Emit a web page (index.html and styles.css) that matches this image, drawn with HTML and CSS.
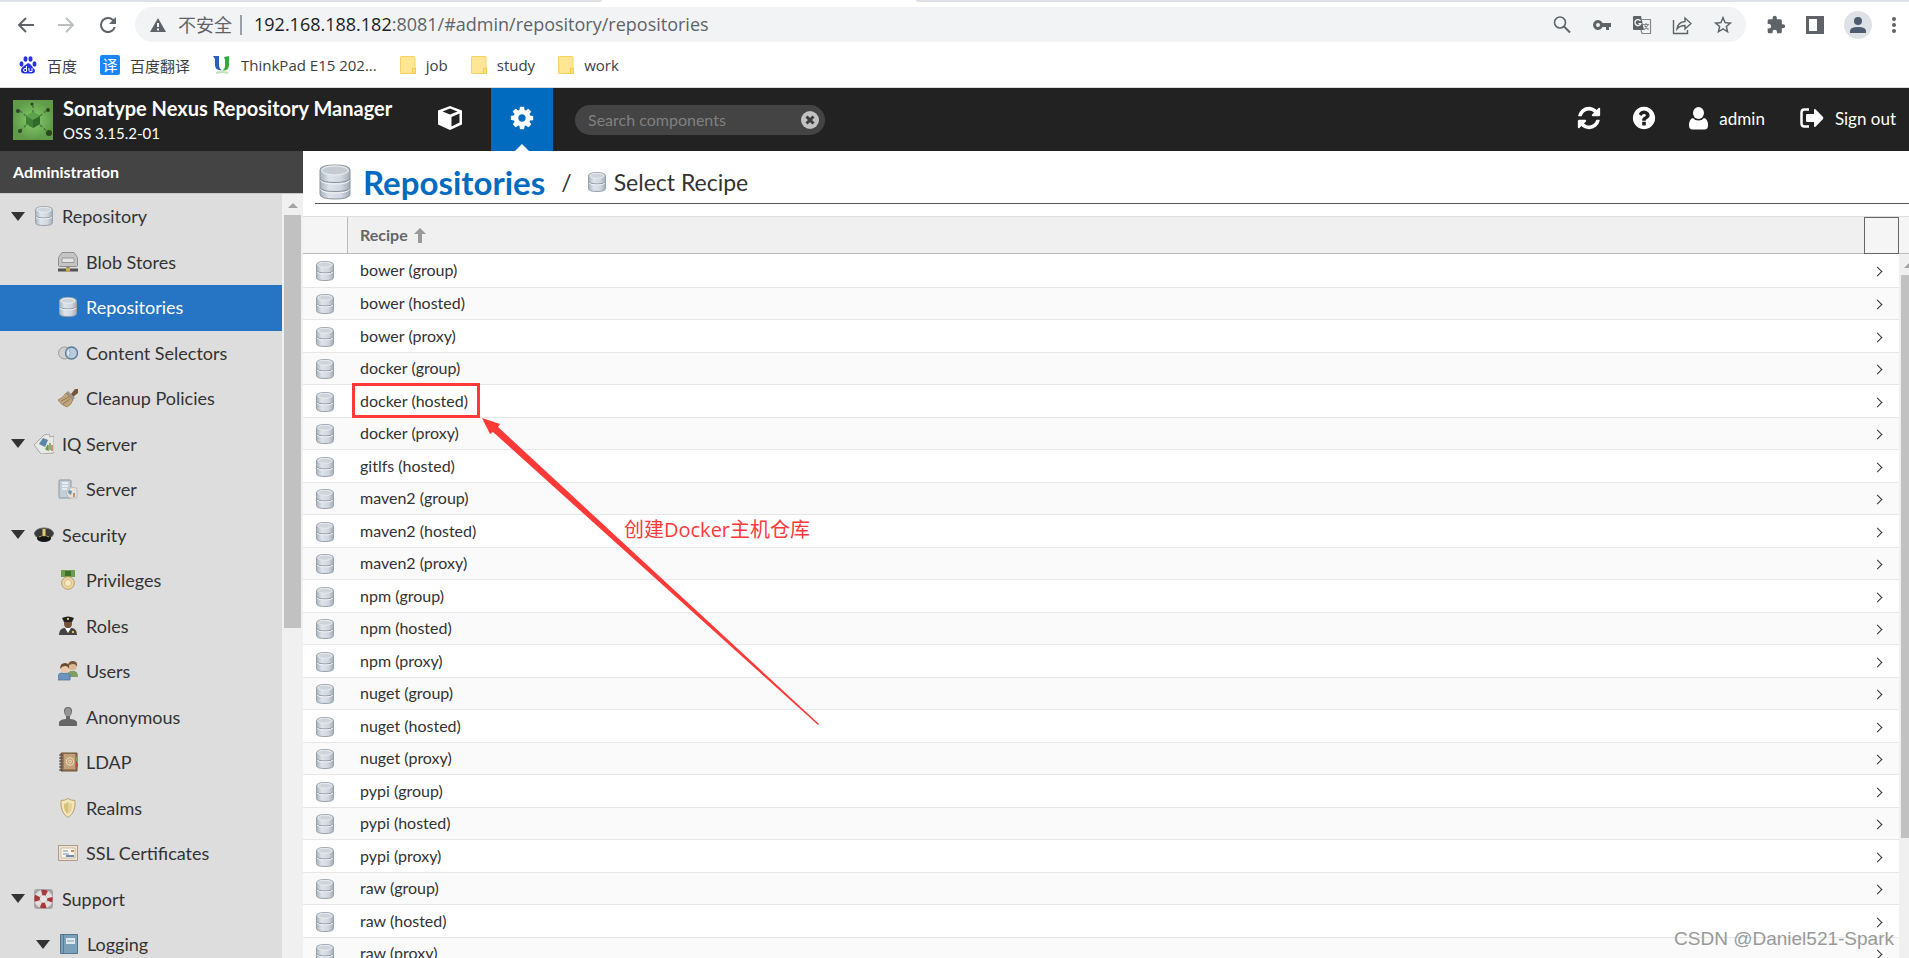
FILE: index.html
```
<!DOCTYPE html>
<html lang="zh-CN">
<head>
    <meta charset="UTF-8">
    <meta name="viewport" content="width=device-width, initial-scale=1.0">
    <title>Repositories - Nexus Repository Manager</title>
    <link rel="stylesheet" href="styles.css">
</head>
<body>

<!-- Shared icons -->
<svg class="defs" aria-hidden="true">
    <defs>
        <linearGradient id="steel" x1="0" x2="1" y1="0" y2="0">
            <stop offset="0" stop-color="#a9b3bd"/>
            <stop offset=".3" stop-color="#dde3ea"/>
            <stop offset=".7" stop-color="#d0d7e0"/>
            <stop offset="1" stop-color="#a3adb7"/>
        </linearGradient>
        <radialGradient id="green">
            <stop offset="0" stop-color="#86cd6c"/>
            <stop offset="1" stop-color="#5f9b49"/>
        </radialGradient>
    </defs>
    <symbol id="db" viewBox="0 0 18 20">
        <path d="M.5 4q0-3.500 8.500-3.500t8.500 3.500v12.500q0 3-8.500 3t-8.500-3z" fill="url(#steel)" stroke="#98a2ab"/>
        <ellipse cx="9" cy="3.800" rx="7.300" ry="2.500" fill="#cdd4db" stroke="#eef1f4" stroke-width=".8"/>
        <path d="M1 10q1 2 8 2t8-2" fill="none" stroke="#8f99a3"/>
        <path d="M1 11q1 2 8 2t8-2" fill="none" stroke="#f1f4f7"/>
    </symbol>
    <symbol id="db-big" viewBox="0 0 32 37">
        <path d="M1 6q0-5 15-5t15 5v24q0 5-15 5t-15-5z" fill="url(#steel)" stroke="#8b959e"/>
        <ellipse cx="16" cy="6.500" rx="13.500" ry="4.500" fill="#c3cad1" stroke="#f0f3f6"/>
        <path d="M1.500 15q2 3.500 14.500 3.500t14.500-3.500M1.500 24q2 3.500 14.500 3.500t14.500-3.500" fill="none" stroke="#87919a"/>
        <path d="M1.500 16.500q2 3.500 14.500 3.500t14.500-3.500M1.500 25.500q2 3.500 14.500 3.500t14.500-3.500" fill="none" stroke="#f3f6f9"/>
    </symbol>
    <symbol id="folder" viewBox="0 0 16 18">
        <path d="M1 .5h13q1 0 1 1v10.500h.5v5.500h-14.500q-.5 0-.5-.5v-16q0-.5.5-.5z" fill="#ffe694" stroke="#f6d260"/>
        <path d="M12.500 12.500h3v5h-3z" fill="#ffe27e" stroke="#f2c94a"/>
    </symbol>
    <symbol id="down" viewBox="0 0 14 9"><path d="M0 0h14l-7 9z" fill="#333"/></symbol>
</svg>

<div class="tabstrip"><i class="tab-left"></i><i class="tab-right"></i></div>

<div class="toolbar">
    <button class="tool" aria-label="Back"><svg width="20" height="20" viewBox="0 0 20 20"><path d="M18 10H3M10 3l-7 7 7 7" fill="none" stroke="#5f6368" stroke-width="2"/></svg></button>
    <button class="tool" aria-label="Forward"><svg width="20" height="20" viewBox="0 0 20 20"><path d="M2 10h15M10 3l7 7-7 7" fill="none" stroke="#bdc0c3" stroke-width="2"/></svg></button>
    <button class="tool" aria-label="Reload"><svg width="24" height="24" viewBox="0 0 24 24"><path d="M17.650 6.350A7.950 7.950 0 0 0 12 4a8 8 0 1 0 7.730 10h-2.080A6 6 0 1 1 12 6c1.660 0 3.140.69 4.220 1.780L13 11h7V4z" fill="#5f6368"/></svg></button>
    <div class="omnibox">
        <svg class="warn" width="16" height="14" viewBox="0 0 16 14"><path d="M8 0l8 14H0z" fill="#5f6368"/><path d="M7 5h2v4H7zM7 10.500h2v2H7z" fill="#f1f3f4"/></svg>
        <span class="insecure">不安全</span>
        <span class="sep"></span>
        <p class="url"><b>192.168.188.182</b>:8081/#admin/repository/repositories</p>
        <svg width="20" height="20" viewBox="0 0 20 20"><circle cx="8" cy="7.500" r="5.500" fill="none" stroke="#5f6368" stroke-width="1.600"/><path d="M12 11.500l6 6" stroke="#5f6368" stroke-width="2"/></svg>
        <svg width="20" height="20" viewBox="0 0 20 20"><path d="M10.600 8A5 5 0 1 0 10.600 12H14v3h3v-3h2V8zM6 12a2 2 0 1 1 0-4 2 2 0 0 1 0 4z" fill="#5f6368"/></svg>
        <svg width="20" height="20" viewBox="0 0 20 20"><path d="M2 1h7l3 14H2q-1 0-1-1V2q0-1 1-1z" fill="#5f6368"/><path d="M8.500 6a3 3 0 1 0 .3 2.500H6.500" fill="none" stroke="#fff" stroke-width="1.200"/><path d="M10 4.500h8.500v14H10l-1-3.500M11 9.500h6M14 8v1.500M12 15l4-5M12.500 10.500l4 4" fill="none" stroke="#85898d" stroke-width="1.200"/></svg>
        <svg width="20" height="20" viewBox="0 0 20 20"><path d="M1.500 5v13.500h14V15M5 14q1-7 8-7.500V3l6 5.500-6 5.500v-3.500q-5 0-8 3.500z" fill="none" stroke="#5f6368" stroke-width="1.400"/></svg>
        <svg width="22" height="22" viewBox="0 0 24 24"><path d="M22 9.240l-7.190-.62L12 2 9.190 8.630 2 9.240l5.460 4.730L5.820 21 12 17.270 18.180 21l-1.630-7.030zM12 15.400l-3.760 2.270 1-4.280-3.320-2.880 4.380-.38L12 6.100l1.710 4.040 4.380.38-3.320 2.880 1 4.280z" fill="#5f6368"/></svg>
    </div>
    <button class="tool" aria-label="Extensions"><svg width="20" height="20" viewBox="0 0 24 24"><path d="M20.500 11H19V7a2 2 0 0 0-2-2h-4V3.500a2.500 2.500 0 0 0-5 0V5H4a2 2 0 0 0-2 2v3.800h1.500a2.700 2.700 0 0 1 0 5.400H2V20a2 2 0 0 0 2 2h3.800v-1.500a2.700 2.700 0 0 1 5.400 0V22H17a2 2 0 0 0 2-2v-4h1.500a2.500 2.500 0 0 0 0-5z" fill="#5f6368"/></svg></button>
    <button class="tool" aria-label="Side panel"><svg width="18" height="18" viewBox="0 0 18 18"><path d="M0 0h18v18H0zM3 3v12h8V3z" fill="#5f6368" fill-rule="evenodd"/></svg></button>
    <button class="tool" aria-label="Profile"><svg width="28" height="28" viewBox="0 0 28 28"><circle cx="14" cy="14" r="14" fill="#dee1e6"/><circle cx="14" cy="10" r="4" fill="#4e5a70"/><path d="M6 22v-2q0-4 8-4t8 4v2z" fill="#4e5a70"/></svg></button>
    <button class="tool" aria-label="Menu"><svg width="4" height="16" viewBox="0 0 4 16" fill="#5f6368"><circle cx="2" cy="2" r="2"/><circle cx="2" cy="8" r="2"/><circle cx="2" cy="14" r="2"/></svg></button>
</div>

<div class="bookmarks">
    <a href="#"><svg width="18" height="18" viewBox="0 0 18 18"><g fill="#2932e1"><ellipse cx="2.500" cy="8" rx="2" ry="2.700"/><ellipse cx="6.500" cy="3" rx="2" ry="2.800"/><ellipse cx="11.500" cy="3" rx="2" ry="2.800"/><ellipse cx="15.500" cy="8" rx="2" ry="2.700"/><path d="M9 7q2 0 3.500 2.500T16 14q0 4-4 3.500H6Q2 18 2 14q0-2 3.500-4.500T9 7z"/></g><path d="M7.500 10v5.500M7.500 12.500H6q-1.500 0-1.500 1.500t1.500 1.500h1.500M10 12v2.500q0 1 1 1h2V12" fill="none" stroke="#fff"/></svg>百度</a>
    <a href="#"><span class="fanyi">译</span>百度翻译</a>
    <a href="#"><svg width="18" height="18" viewBox="0 0 18 18"><path d="M0 0h6v9q0 4 3 5-7 1-7-5V3z" fill="#2a5fb4"/><path d="M11 1l5-1v9q0 6-7 5.500 3-1 3-5V4z" fill="#35a936"/><path d="M3 17q6-2 12 0" fill="none" stroke="#bfe3bd" stroke-width="2"/></svg>ThinkPad E15 202...</a>
    <a href="#"><svg width="16" height="18"><use href="#folder"/></svg>job</a>
    <a href="#"><svg width="16" height="18"><use href="#folder"/></svg>study</a>
    <a href="#"><svg width="16" height="18"><use href="#folder"/></svg>work</a>
</div>

<header class="header">
    <svg class="logo" width="40" height="40" viewBox="0 0 40 40">
        <path d="M0 0h40v40H0z" fill="url(#green)"/>
        <path d="M20 13V5M27 16l7-6M27 25l9 8M13 25l-6 6M13 16L6 10" stroke="#4a7a3e" stroke-width="1.500" stroke-dasharray="3 2"/>
        <g fill="#2b4526"><circle cx="19" cy="4" r="1.500"/><circle cx="35" cy="10" r="2"/><circle cx="36" cy="33" r="3"/><circle cx="7" cy="31" r="2"/><circle cx="5" cy="11" r="2"/></g>
        <path d="M20 12l7 4v8l-7 4-7-4v-8z" fill="#3f7d36"/><path d="M20 12l7 4-7 4-7-4z" fill="#5ba34b"/><path d="M20 20l7-4v8l-7 4z" fill="#326a2b"/>
    </svg>
    <div class="brand">
        <strong>Sonatype Nexus Repository Manager</strong>
        <span>OSS 3.15.2-01</span>
    </div>
    <button class="mode" aria-label="Browse"><svg width="24" height="24" viewBox="0 0 24 24"><path d="M12 0l12 4.500v14L12 24 0 18.500v-14zM12 2.500L4.500 5.500 12 8.500l7.500-3zM13.500 11v9.500l8-4v-9z" fill="#fff" fill-rule="evenodd"/></svg></button>
    <button class="mode active" aria-label="Administration"><svg width="26" height="26" viewBox="0 0 1792 1792"><path fill="#fff" d="M1152 896q0-106-75-181t-181-75-181 75-75 181 75 181 181 75 181-75 75-181zm512-109v222q0 12-8 23t-20 13l-185 28q-19 54-39 91 35 50 107 138 10 12 10 25t-9 23q-27 37-99 108t-94 71q-12 0-26-9l-138-108q-44 23-91 38-16 136-29 186-7 28-36 28h-222q-14 0-24.500-8.500t-11.500-21.500l-28-184q-49-16-90-37l-141 107q-10 9-25 9-14 0-25-11-126-114-165-168-7-10-7-23 0-12 8-23 15-21 51-66.500t54-70.500q-27-50-41-99l-183-27q-13-2-21-12.500t-8-23.500v-222q0-12 8-23t19-13l186-28q14-46 39-92-40-57-107-138-10-12-10-24 0-10 9-23 26-36 98.500-107.500t94.500-71.500q13 0 26 10l138 107q44-23 91-38 16-136 29-186 7-28 36-28h222q14 0 24.500 8.500t11.500 21.500l28 184q49 16 90 37l142-107q9-9 24-9 13 0 25 10 129 119 165 170 7 8 7 22 0 12-8 23-15 21-51 66.500t-54 70.500q26 50 41 98l183 28q13 2 21 12.500t8 23.500z"/></svg></button>
    <div class="search">
        <input type="text" placeholder="Search components" aria-label="Search components">
        <button aria-label="Clear"><svg width="18" height="18" viewBox="0 0 18 18"><circle cx="9" cy="9" r="9" fill="#c3c3c3"/><path d="M5.500 5.500l7 7M12.500 5.500l-7 7" stroke="#3d3d3d" stroke-width="3"/></svg></button>
    </div>
    <div class="actions">
        <button aria-label="Refresh"><svg width="26" height="26" viewBox="0 0 1792 1792"><path fill="#fff" d="M1639 1056q0 5-1 7-64 268-268 434.500t-478 166.500q-146 0-282.500-55t-243.500-157l-129 129q-19 19-45 19t-45-19-19-45v-448q0-26 19-45t45-19h448q26 0 45 19t19 45-19 45l-137 137q71 66 161 102t187 36q134 0 250-65t186-179q11-17 53-117 8-23 30-23h192q13 0 22.500 9.500t9.500 22.500zm25-800v448q0 26-19 45t-45 19h-448q-26 0-45-19t-19-45 19-45l138-138q-148-137-349-137-134 0-250 65t-186 179q-11 17-53 117-8 23-30 23h-199q-13 0-22.500-9.500t-9.500-22.500v-7q65-268 270-434.500t480-166.500q146 0 284 55.500t245 156.500l130-129q19-19 45-19t45 19 19 45z"/></svg></button>
        <button aria-label="Help"><svg width="26" height="26" viewBox="0 0 1792 1792"><path fill="#fff" d="M1024 1376v-192q0-14-9-23t-23-9h-192q-14 0-23 9t-9 23v192q0 14 9 23t23 9h192q14 0 23-9t9-23zm256-672q0-88-55.500-163t-138.500-116-170-41q-243 0-371 213-15 24 8 42l132 100q7 6 19 6 16 0 25-12 53-68 86-92 34-24 86-24 48 0 85.500 26t37.500 59q0 38-20 61t-68 45q-63 28-115.500 86.500t-52.500 125.500v36q0 14 9 23t23 9h192q14 0 23-9t9-23q0-19 21.500-49.500t54.500-49.500q32-18 49-28.500t46-35 44.500-48 28-60.500 12.500-81zm384 192q0 209-103 385.500t-279.500 279.500-385.500 103-385.500-103-279.500-279.500-103-385.500 103-385.500 279.500-279.500 385.500-103 385.500 103 279.500 279.500 103 385.500z"/></svg></button>
        <button class="user"><svg width="19" height="23" viewBox="0 0 19 23" fill="#fff"><ellipse cx="9.500" cy="6" rx="5.500" ry="6"/><path d="M4 11q2 2.500 5.500 2.500T15 11q4 1 4 7.500 0 4-3.500 4h-12Q0 22.500 0 18.500 0 12 4 11z"/></svg>admin</button>
        <button><svg width="24" height="20" viewBox="0 0 24 20"><path d="M9 1.500H4.500q-3 0-3 3v11q0 3 3 3H9" fill="none" stroke="#fff" stroke-width="2.500"/><path d="M14 2q0-1.500 1.500-.7L23 9q.7 1 0 2l-7.500 7.700Q14 19.500 14 18v-4H7q-1 0-1-1V7q0-1 1-1h7z" fill="#fff"/></svg>Sign out</button>
    </div>
</header>

<div class="app">
    <aside class="side">
        <h2>Administration</h2>
        <div class="side-body">
            <nav class="tree">
                <a href="#"><svg class="arrow"><use href="#down"/></svg><svg class="icon"><use href="#db"/></svg>Repository</a>
                <a href="#" class="sub"><svg class="icon" viewBox="0 0 20 20"><path d="M4 .5h12l3.500 5v8q0 1-1 1h-17q-1 0-1-1v-8z" fill="#c4c4c4" stroke="#8e8e8e"/><path d="M4 6h12v4.500H4z" fill="#e4e4e4" stroke="#999"/><path d="M10 15v2M0 18h20" stroke="#555" stroke-width="3"/><path d="M8 15.500h4v4H8z" fill="#cfa95b"/></svg>Blob Stores</a>
                <a href="#" class="sub selected"><svg class="icon"><use href="#db"/></svg>Repositories</a>
                <a href="#" class="sub"><svg class="icon" viewBox="0 0 20 20"><circle cx="6.500" cy="10" r="6" fill="#d0d0d0" stroke="#9a9a9a"/><circle cx="13.500" cy="10" r="6" fill="#b9cbdc" stroke="#58799b" stroke-width="1.300"/><path d="M10.500 5q-4 5 0 10 3-5 0-10z" fill="#e6eef5" stroke="#7c93ab" stroke-width=".7"/></svg>Content Selectors</a>
                <a href="#" class="sub"><svg class="icon" viewBox="0 0 20 20"><path d="M13 6l4-5h3v4l-5 4z" fill="#74563e"/><path d="M10 3l7 7-2 2-7-7z" fill="#9b948b"/><path d="M8 5l7 7q-2 5-6 7Q3 17 0 12q5-2 8-7z" fill="#c0a57c" stroke="#8c7453" stroke-width=".7"/><path d="M3 13l8-4M5 16l7-5" stroke="#927a58"/></svg>Cleanup Policies</a>
                <a href="#"><svg class="arrow"><use href="#down"/></svg><svg class="icon" viewBox="0 0 20 20"><path d="M10 1l5-1 1 3 4-1v17l-13 1L0 11z" fill="#e8e8e5" stroke="#a8a8a5"/><path d="M9 4l5 2-3 7-6-3z" fill="#5b86a7"/><path d="M12 15l2-4v5zM16 9v7" stroke="#6b9f55" stroke-width="1.500"/><path d="M18 11v6" stroke="#c87544" stroke-width="1.500"/></svg>IQ Server</a>
                <a href="#" class="sub"><svg class="icon" viewBox="0 0 20 20"><path d="M2 1h10q1 0 1 1v17H2q-1 0-1-1V2q0-1 1-1z" fill="#c5ced6" stroke="#8796a3"/><path d="M4 4h6M4 7h6M4 10h5" stroke="#f4f7f9" stroke-width="1.500"/><path d="M8 14l5-6 6 1v10h-8z" fill="#e2e2df" stroke="#b0b0ae" stroke-width=".7"/><path d="M11 11l3 1-1 4-3-2z" fill="#6b93b2"/><path d="M16 14v4" stroke="#c98d66" stroke-width="2"/></svg>Server</a>
                <a href="#"><svg class="arrow"><use href="#down"/></svg><svg class="icon" viewBox="0 0 20 20"><ellipse cx="10" cy="8.500" rx="9.500" ry="5.500" fill="#3a3a3a" stroke="#666"/><ellipse cx="10" cy="13.500" rx="7" ry="3.500" fill="#151515"/><path d="M5 12q5-3 10 0" fill="none" stroke="#b9a25a" stroke-width="1.200"/><path d="M8.500 4h3v6L10 11.500 8.500 10z" fill="#e3cd78"/></svg>Security</a>
                <a href="#" class="sub"><svg class="icon" viewBox="0 0 20 20"><path d="M3 0h14v7H3z" fill="#6d9e4f"/><path d="M7 1h6v5H7z" fill="#3f712c"/><circle cx="10" cy="13" r="6.300" fill="#eed9a6" stroke="#b39a61"/><circle cx="10" cy="13" r="3.500" fill="#f7eac5" stroke="#d3bb81"/></svg>Privileges</a>
                <a href="#" class="sub"><svg class="icon" viewBox="0 0 20 20"><path d="M1 19q0-6 5-7h8q5 1 5 7z" fill="#444"/><ellipse cx="10" cy="7.500" rx="4" ry="5" fill="#6f5239"/><path d="M4 2q6-3 12 0l-2 4H6z" fill="#222"/><path d="M9 2h2v2H9zM14 15h2v2h-2z" fill="#e3c355"/><path d="M7 12l3 5 3-5z" fill="#fff"/></svg>Roles</a>
                <a href="#" class="sub"><svg class="icon" viewBox="0 0 20 20"><path d="M9 16q0-6 4-6h3q4 0 4 6z" fill="#7d9d63"/><circle cx="14.500" cy="5.500" r="4" fill="#deb893"/><path d="M10 5q0-5 5-5t4 6q-1-3-4-3t-5 2z" fill="#775639"/><path d="M0 19q-1-7 4-7h4q5 0 4 7z" fill="#6d94bf" stroke="#456a97" stroke-width=".7"/><circle cx="6.500" cy="8" r="4" fill="#ecc9a4"/><path d="M2 8q0-6 5-6t4 6q-1-3-4-3t-5 3z" fill="#6a4a30"/></svg>Users</a>
                <a href="#" class="sub"><svg class="icon" viewBox="0 0 20 20"><path d="M1 19v-4q2-3 7-3V9q-2-2-2-5 0-4 4-4t4 4q0 3-2 5v3q5 0 7 3v4z" fill="#666"/><path d="M8 9q-1-2-1-5 0-3 3-3t3 3q0 3-1 5z" fill="#949494"/></svg>Anonymous</a>
                <a href="#" class="sub"><svg class="icon" viewBox="0 0 20 20"><path d="M3 1h16v18H3z" fill="#9c7a58" stroke="#6a4e33"/><path d="M6 2h11v15H6z" fill="#c2a079"/><circle cx="12" cy="9.500" r="3.800" fill="none" stroke="#eedcc2"/><circle cx="12" cy="9.500" r="1.500" fill="none" stroke="#eedcc2"/><path d="M1 3h4M1 6h4M1 9h4M1 12h4M1 15h4M1 18h4" stroke="#444"/><path d="M19 5v4" stroke="#7ba253" stroke-width="2"/><path d="M19 11v4" stroke="#c3493c" stroke-width="2"/></svg>LDAP</a>
                <a href="#" class="sub"><svg class="icon" viewBox="0 0 20 20"><path d="M10 .5q3 2 7 2 1 12-7 17Q2 14.500 3 2.500q4 0 7-2z" fill="#f5e6b8" stroke="#b7a273"/><path d="M10 4v12Q5 12 6 6q2 0 4-2z" fill="#d6c07d"/><path d="M10 4v12q5-4 4-10-2 0-4-2z" fill="#e4d296"/></svg>Realms</a>
                <a href="#" class="sub"><svg class="icon" viewBox="0 0 20 20"><path d="M.5 2.500h19v15H.5z" fill="#ece3d5" stroke="#ad9b85"/><path d="M3 5h14v10H3z" fill="#f8f4ee" stroke="#cdbca6"/><path d="M5 8h5M5 11h6" stroke="#7a8fa4"/><path d="M8 13h8" stroke="#42679c" stroke-width="1.500"/><path d="M13 7h3v2h-3z" fill="#c38f70"/></svg>SSL Certificates</a>
                <a href="#"><svg class="arrow"><use href="#down"/></svg><svg class="icon" viewBox="0 0 20 20"><rect width="19" height="20" rx="3" fill="#a5a5a5"/><circle cx="9.500" cy="10" r="6.500" fill="none" stroke="#e6dcdc" stroke-width="5.500"/><circle cx="9.500" cy="10" r="6.500" fill="none" stroke="#a6393a" stroke-width="5.500" stroke-dasharray="5.100 5.100" stroke-dashoffset="2.550"/><circle cx="9.500" cy="10" r="3.500" fill="#e6e6e6"/></svg>Support</a>
                <a href="#" class="folder"><svg class="arrow"><use href="#down"/></svg><svg class="icon" viewBox="0 0 20 20"><path d="M1.500.5h17v19h-17z" fill="#7ba0b9" stroke="#4f7590"/><path d="M4.500 1v18" stroke="#547c98"/><path d="M7 4h9v6H7z" fill="#dfe9ef"/><path d="M8 7h7" stroke="#7ba0b9"/></svg>Logging</a>
            </nav>
            <div class="scrollbar"><i class="up"></i><i class="thumb"></i></div>
        </div>
    </aside>

    <main class="content">
        <div class="crumbs">
            <svg width="32" height="37"><use href="#db-big"/></svg>
            <h1>Repositories</h1>
            <span class="slash">/</span>
            <svg width="18" height="20"><use href="#db"/></svg>
            <span class="current">Select Recipe</span>
        </div>
        <div class="grid">
            <table>
                <thead>
                    <tr><th class="c-icon"></th><th>Recipe <svg width="12" height="15" viewBox="0 0 12 15"><path d="M6 0l6 6H8v9H4V6H0z" fill="#999"/></svg></th><th class="c-go"></th><th class="c-bar"></th></tr>
                </thead>
            </table>
            <div class="grid-body">
                <table>
                    <tbody>
                        <tr><td class="c-icon"><svg class="icon"><use href="#db"/></svg></td><td>bower (group)</td><td class="c-go"></td></tr>
                        <tr><td class="c-icon"><svg class="icon"><use href="#db"/></svg></td><td>bower (hosted)</td><td class="c-go"></td></tr>
                        <tr><td class="c-icon"><svg class="icon"><use href="#db"/></svg></td><td>bower (proxy)</td><td class="c-go"></td></tr>
                        <tr><td class="c-icon"><svg class="icon"><use href="#db"/></svg></td><td>docker (group)</td><td class="c-go"></td></tr>
                        <tr><td class="c-icon"><svg class="icon"><use href="#db"/></svg></td><td>docker (hosted)</td><td class="c-go"></td></tr>
                        <tr><td class="c-icon"><svg class="icon"><use href="#db"/></svg></td><td>docker (proxy)</td><td class="c-go"></td></tr>
                        <tr><td class="c-icon"><svg class="icon"><use href="#db"/></svg></td><td>gitlfs (hosted)</td><td class="c-go"></td></tr>
                        <tr><td class="c-icon"><svg class="icon"><use href="#db"/></svg></td><td>maven2 (group)</td><td class="c-go"></td></tr>
                        <tr><td class="c-icon"><svg class="icon"><use href="#db"/></svg></td><td>maven2 (hosted)</td><td class="c-go"></td></tr>
                        <tr><td class="c-icon"><svg class="icon"><use href="#db"/></svg></td><td>maven2 (proxy)</td><td class="c-go"></td></tr>
                        <tr><td class="c-icon"><svg class="icon"><use href="#db"/></svg></td><td>npm (group)</td><td class="c-go"></td></tr>
                        <tr><td class="c-icon"><svg class="icon"><use href="#db"/></svg></td><td>npm (hosted)</td><td class="c-go"></td></tr>
                        <tr><td class="c-icon"><svg class="icon"><use href="#db"/></svg></td><td>npm (proxy)</td><td class="c-go"></td></tr>
                        <tr><td class="c-icon"><svg class="icon"><use href="#db"/></svg></td><td>nuget (group)</td><td class="c-go"></td></tr>
                        <tr><td class="c-icon"><svg class="icon"><use href="#db"/></svg></td><td>nuget (hosted)</td><td class="c-go"></td></tr>
                        <tr><td class="c-icon"><svg class="icon"><use href="#db"/></svg></td><td>nuget (proxy)</td><td class="c-go"></td></tr>
                        <tr><td class="c-icon"><svg class="icon"><use href="#db"/></svg></td><td>pypi (group)</td><td class="c-go"></td></tr>
                        <tr><td class="c-icon"><svg class="icon"><use href="#db"/></svg></td><td>pypi (hosted)</td><td class="c-go"></td></tr>
                        <tr><td class="c-icon"><svg class="icon"><use href="#db"/></svg></td><td>pypi (proxy)</td><td class="c-go"></td></tr>
                        <tr><td class="c-icon"><svg class="icon"><use href="#db"/></svg></td><td>raw (group)</td><td class="c-go"></td></tr>
                        <tr><td class="c-icon"><svg class="icon"><use href="#db"/></svg></td><td>raw (hosted)</td><td class="c-go"></td></tr>
                        <tr><td class="c-icon"><svg class="icon"><use href="#db"/></svg></td><td>raw (proxy)</td><td class="c-go"></td></tr>
                    </tbody>
                </table>
                <div class="scrollbar"><i class="up"></i><i class="thumb"></i></div>
            </div>
        </div>

        <!-- Annotations drawn over the grid -->
        <div class="mark-box"></div>
        <svg class="mark-arrow" width="338" height="308" viewBox="0 0 338 308"><path d="M0 0l18 6-2 3 321 297-1 1L11 14l-3 2z" fill="#fd3a38"/></svg>
        <p class="mark-text">创建Docker主机仓库</p>
        <p class="watermark">CSDN @Daniel521-Spark</p>
    </main>
</div>

</body>
</html>
```
FILE: styles.css
```
* {
    box-sizing: border-box;
}
body {
    margin: 0;
    height: 100vh;
    display: flex;
    flex-direction: column;
    overflow: hidden;
    background: #fff;
    color: #333;
    font-family: Lato, "Noto Sans CJK SC", sans-serif;
    font-size: 16px;
}
a {
    color: inherit;
    text-decoration: none;
}
button {
    display: flex;
    align-items: center;
    padding: 0;
    border: none;
    background: none;
    font: inherit;
    color: inherit;
    cursor: pointer;
}
svg {
    flex: none;
    display: block;
}
p, h1, h2 {
    margin: 0;
}
.defs {
    position: absolute;
    width: 0;
    height: 0;
}

/* Browser chrome */
.tabstrip {
    flex: none;
    display: flex;
    justify-content: space-between;
    height: 2px;
}
.tab-left {
    width: 602px;
    background: #dee1e6;
    border-bottom-right-radius: 2px;
}
.tab-right {
    width: 52%;
    background: #dee1e6;
    border-bottom-left-radius: 2px;
}
.toolbar, .bookmarks {
    flex: none;
    display: flex;
    align-items: center;
    font-family: "Open Sans", "Noto Sans CJK SC", sans-serif;
}
.toolbar {
    height: 45px;
    gap: 20px;
    padding: 0 13px 0 16px;
}
.omnibox {
    flex: 1;
    display: flex;
    align-items: center;
    gap: 20px;
    height: 35px;
    margin-left: -5px;
    padding: 0 12px 0 15px;
    border-radius: 18px;
    background: #f1f3f4;
    color: #5f6368;
    font-size: 18px;
}
.omnibox .warn {
    margin-right: -8px;
}
.insecure, .url {
    padding-bottom: 2px;
    white-space: nowrap;
}
.insecure {
    margin-right: -12px;
}
.sep {
    width: 2px;
    height: 20px;
    margin-right: -8px;
    background: #9aa0a6;
}
.url {
    flex: 1;
}
.url b {
    font-weight: normal;
    color: #202124;
}
.bookmarks {
    height: 41px;
    gap: 23px;
    padding: 0 19px 4px;
    border-bottom: 1px solid #dadce0;
    color: #3c4043;
    font-size: 15px;
}
.bookmarks a {
    display: flex;
    align-items: center;
    gap: 10px;
}
.fanyi {
    width: 20px;
    height: 20px;
    border-radius: 2px;
    background: #1a86fb;
    color: #fff;
    line-height: 20px;
    text-align: center;
}

/* Header */
.header {
    flex: none;
    display: flex;
    align-items: center;
    height: 63px;
    padding: 0 13px;
    background: #222;
    color: #fff;
}
.brand {
    flex: none;
    display: flex;
    flex-direction: column;
    width: 366px;
    padding-left: 10px;
}
.brand strong {
    font-size: 20px;
    line-height: 26px;
}
.brand span {
    font-size: 15px;
    line-height: 24px;
}
.mode {
    position: relative;
    flex: none;
    justify-content: center;
    width: 62px;
    height: 63px;
    margin-right: 10px;
    padding-bottom: 3px;
}
.mode.active {
    background: #006bbf;
}
.mode.active::after {
    content: "";
    position: absolute;
    left: 24px;
    bottom: 0;
    border: 7px solid transparent;
    border-top: none;
    border-bottom: 7px solid #fff;
}
.search {
    display: flex;
    align-items: center;
    width: 250px;
    height: 30px;
    margin-left: 12px;
    padding: 0 6px 0 13px;
    border-radius: 15px;
    background: #444;
}
.search input {
    flex: 1;
    min-width: 0;
    padding: 0;
    border: none;
    outline: none;
    background: none;
    color: #fff;
    font: inherit;
}
.search input::placeholder {
    color: #808080;
}
.actions {
    display: flex;
    align-items: center;
    gap: 29px;
    margin-left: auto;
    padding-bottom: 3px;
    font-size: 17px;
}
.actions button {
    gap: 11px;
}
.user {
    margin: 0 6px 0 3px;
}

/* Sidebar */
.app {
    flex: 1;
    display: flex;
    min-height: 0;
}
.side {
    flex: none;
    display: flex;
    flex-direction: column;
    width: 303px;
}
.side h2 {
    flex: none;
    height: 43px;
    padding-left: 13px;
    border-bottom: 1px solid #c9c9c9;
    background: #444;
    color: #fff;
    font-size: 16px;
    line-height: 42px;
}
.side-body {
    flex: 1;
    display: flex;
    min-height: 0;
}
.tree {
    flex: 1;
    overflow: hidden;
    background: #ddd;
}
.tree a {
    display: flex;
    align-items: center;
    height: 46px;
    padding: 0 0 2px 11px;
    font-size: 18px;
}
.tree a:nth-child(even) {
    height: 45px;
}
.tree .sub {
    padding-left: 58px;
}
.tree .folder {
    padding-left: 36px;
}
.tree .selected {
    background: #2575c4;
    color: #fff;
}
.tree .icon {
    margin-right: 8px;
}
.icon {
    width: 20px;
    height: 20px;
}
.arrow {
    width: 14px;
    height: 9px;
    margin-right: 9px;
}
.scrollbar {
    flex: none;
    display: flex;
    flex-direction: column;
    align-items: center;
    width: 21px;
    background: #f0f0f0;
}
.up {
    margin: 9px 0 7px;
    border: 5px solid transparent;
    border-top: none;
    border-bottom: 5px solid #a3a3a3;
}
.thumb {
    width: 17px;
    height: 54%;
    background: #c1c1c1;
}

/* Content */
.content {
    position: relative;
    flex: 1;
    min-width: 0;
    display: flex;
    flex-direction: column;
    overflow: hidden;
}
.crumbs {
    flex: none;
    display: flex;
    align-items: center;
    height: 53px;
    margin-left: 12px;
    padding: 10px 0 0 4px;
    border-bottom: 1px solid #555;
}
.crumbs h1 {
    margin-left: 12px;
    color: #006bbf;
    font-size: 33px;
    line-height: 32px;
}
.slash {
    margin: 0 16px;
    font-size: 23px;
}
.current {
    margin-left: 8px;
    font-size: 23px;
}
.grid {
    flex: 1;
    min-height: 0;
    margin-top: 12px;
    display: flex;
    flex-direction: column;
    border-top: 1px solid #ddd;
}
.grid table {
    width: 100%;
    table-layout: fixed;
    border-collapse: separate;
    border-spacing: 0;
}
th {
    height: 37px;
    padding: 0 12px;
    border-bottom: 1px solid #bbb;
    background: #f0f0f0;
    color: #666;
    font-size: 16px;
    line-height: 20px;
    text-align: left;
}
th svg {
    display: inline-block;
    vertical-align: -2px;
    margin-left: 2px;
}
.c-icon {
    width: 45px;
    padding: 0 12px;
}
th.c-icon {
    border-right: 1px solid #bbb;
    background: #f5f5f5;
}
.c-go {
    width: 35px;
}
th.c-go {
    border: 1px solid #666;
    background: #f5f5f5;
}
.c-bar {
    width: 10px;
    padding: 0;
    background: #f5f5f5;
}
.grid-body {
    flex: 1;
    display: flex;
    min-height: 0;
    overflow: hidden;
}
.grid-body table {
    flex: 1;
    align-self: flex-start;
}
.grid-body .scrollbar {
    width: 10px;
    overflow: hidden;
    align-items: flex-start;
    padding-left: 2px;
}
.grid-body .thumb {
    height: 80%;
}
.grid-body .up {
    margin-left: 3px;
}
td {
    height: 33px;
    padding: 0 12px 1px;
    border-bottom: 1px solid #e7e7e7;
    font-size: 16px;
    line-height: 20px;
}
tr:nth-child(even) td {
    height: 32px;
    background: #fafafa;
}
tr:first-child td {
    height: 34px;
}
td.c-icon {
    padding: 1px 12px 0;
}
td.c-go {
    padding: 2px 10px 0;
}
td.c-go::before {
    content: "";
    display: block;
    width: 6px;
    height: 6px;
    border: solid #333;
    border-width: 1px 1px 0 0;
    transform: rotate(45deg);
}

/* Annotations */
.mark-box {
    position: absolute;
    left: 49px;
    top: 232px;
    width: 128px;
    height: 35px;
    border: 3px solid #fd3a38;
}
.mark-arrow {
    position: absolute;
    left: 179px;
    top: 267px;
}
.mark-text {
    position: absolute;
    left: 321px;
    top: 364px;
    color: #fd3a38;
    font: 20px/30px "Open Sans", "Noto Sans CJK SC", sans-serif;
}
.watermark {
    position: absolute;
    right: 15px;
    bottom: 6px;
    color: #999;
    font: 19px/26px "Liberation Sans", Arial, sans-serif;
}
```
